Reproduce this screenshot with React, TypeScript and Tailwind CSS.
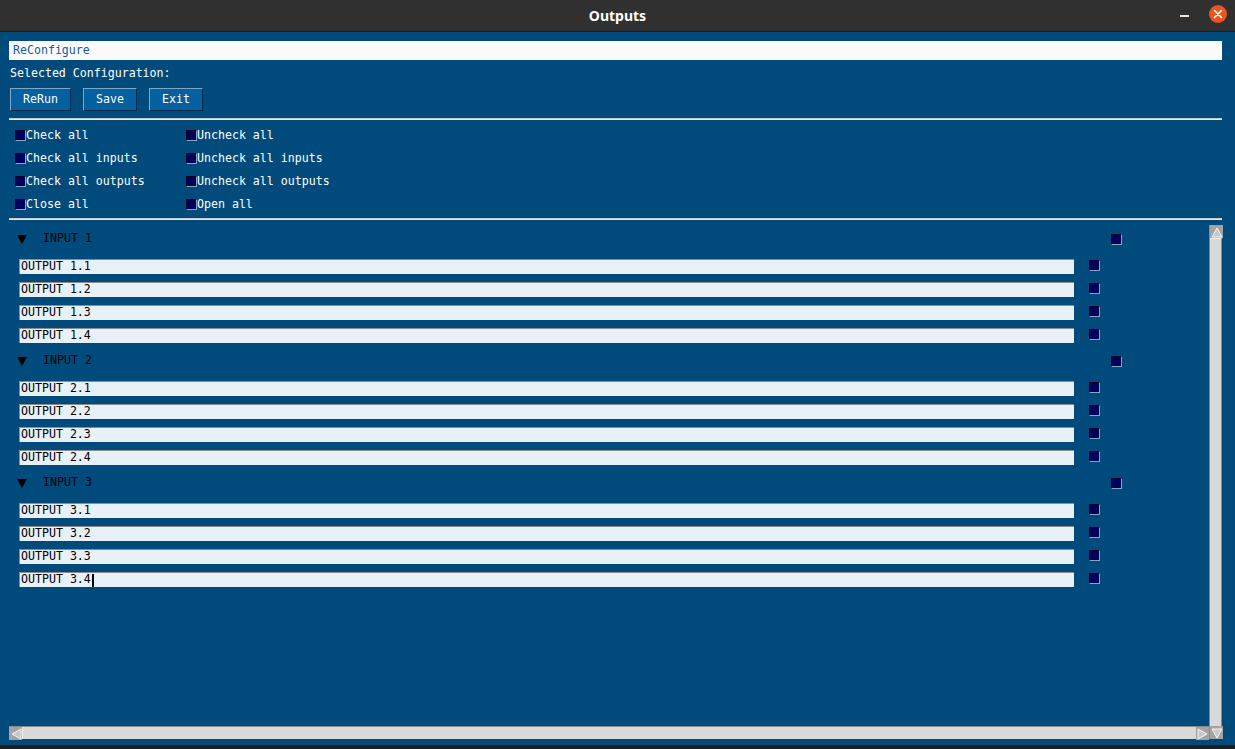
import React from 'react'

const mono = { fontFamily: '"DejaVu Sans Mono", "Liberation Mono", monospace' }

// Tk style check square: dark fill, light edge at right/bottom
function Box() {
  return <span className="block w-[11px] h-[11px] bg-[#000058] border-t border-l border-t-[#00002a] border-l-[#00002a] border-r border-b border-r-[#8aa4c8] border-b-[#8aa4c8] shrink-0" />
}

function Btn({ label, w }: { label: string; w: string }) {
  return (
    <div className={`${w} h-[23px] flex items-center justify-center pt-[1px] bg-[#0560a0] text-white border border-t-[#7fa6c6] border-l-[#7fa6c6] border-r-[#00284a] border-b-[#00284a]`}>
      {label}
    </div>
  )
}

function Arrow({ dir }: { dir: 'up' | 'down' | 'left' | 'right' }) {
  const pts = {
    up: '6,2 11,11 1,11',
    down: '1,2 11,2 6,11',
    left: '2,6 11,1 11,11',
    right: '1,1 10,6 1,11',
  }[dir]
  return (
    <div className="w-[13px] h-[13px] bg-[#a3a3a3] flex items-center justify-center shrink-0">
      <svg width="12" height="12" viewBox="0 0 12 12">
        <polygon points={pts} fill="#c8c8c8" stroke="#f4f4f4" strokeWidth="1" />
      </svg>
    </div>
  )
}

const actions: [string, string][] = [
  ['Check all', 'Uncheck all'],
  ['Check all inputs', 'Uncheck all inputs'],
  ['Check all outputs', 'Uncheck all outputs'],
  ['Close all', 'Open all'],
]

export default function App() {
  const inputs = [1, 2, 3]
  return (
    <div className="w-[1235px] h-[749px] flex flex-col bg-[#2c2c2c] overflow-hidden text-[11.6px]" style={mono}>
      {/* title bar */}
      <div className="h-[32px] shrink-0 relative flex items-center justify-center bg-[#303030] border-b border-[#1c1c1c]">
        <span className="text-white font-bold text-[14px]" style={{ fontFamily: '"Noto Sans", "DejaVu Sans", sans-serif' }}>Outputs</span>
        <span className="absolute left-[1180px] top-[15px] w-[9px] h-[2px] bg-[#e8e8e8]" />
        <span className="absolute left-[1209px] top-[5px] w-[18px] h-[18px] rounded-full bg-[#e95420] flex items-center justify-center">
          <svg width="10" height="10" viewBox="0 0 10 10">
            <path d="M1.5 1.5 L8.5 8.5 M8.5 1.5 L1.5 8.5" stroke="#fff" strokeWidth="1.6" strokeLinecap="round" />
          </svg>
        </span>
      </div>

      {/* body */}
      <div className="flex-1 flex flex-col bg-[#014b7c] pl-[9px] pr-[13px] pt-[9px] pb-[6px] min-h-0">
        <div className="h-[19px] shrink-0 bg-[#fafafa] text-[#1a5a98] flex items-center pl-[4px]">ReConfigure</div>
        <div className="h-[27px] shrink-0 flex items-center pl-[1px] text-white">Selected Configuration:</div>
        <div className="flex gap-[12px] pl-[1px] shrink-0 pt-[1px]">
          <Btn label="ReRun" w="w-[61px]" />
          <Btn label="Save" w="w-[54px]" />
          <Btn label="Exit" w="w-[54px]" />
        </div>
        <div className="mt-[7px] h-[2px] shrink-0 bg-[#c8c8c8] border-b border-[#e8e8e8]" />

        <div className="flex flex-col pt-[4px] pl-[6px] shrink-0">
          {actions.map(([a, b]) => (
            <div key={a} className="h-[23px] flex items-center text-white">
              <div className="w-[171px] flex items-center"><Box /><span>{a}</span></div>
              <div className="flex items-center"><Box /><span>{b}</span></div>
            </div>
          ))}
        </div>
        <div className="mt-[2px] h-[2px] shrink-0 bg-[#c8c8c8] border-b border-[#e8e8e8]" />

        {/* scrolled area */}
        <div className="flex-1 mt-[5px] flex min-h-0">
          <div className="flex-1 flex flex-col min-w-0">
            <div className="flex-1 flex flex-col min-h-0 pt-[2px]">
              {inputs.map((i) => (
                <div key={i} className="flex flex-col">
                  <div className="h-[30px] flex items-start">
                    <div className="h-[24px] w-full flex items-center text-black">
                      <svg width="10" height="9" viewBox="0 0 10 9" className="ml-[8px]">
                        <polygon points="0,0 10,0 5,9" fill="#000" />
                      </svg>
                      <span className="ml-[16px]">INPUT {i}</span>
                      <span className="ml-auto mr-[87px]"><Box /></span>
                    </div>
                  </div>
                  {[1, 2, 3, 4].map((o) => (
                    <div key={o} className="h-[23px] flex items-start pt-[2px]">
                      <div className="ml-[10px] w-[1055px] h-[15px] bg-[#e8f0f8] border-t border-l border-[#8c8c8c] flex items-center pl-[1px] text-black leading-none">
                        OUTPUT {i}.{o}
                        {i === 3 && o === 4 && <span className="inline-block w-[2px] h-[13px] bg-black ml-[1px]" />}
                      </div>
                      <span className="ml-[15px] mt-[1px]"><Box /></span>
                    </div>
                  ))}
                </div>
              ))}
            </div>
            {/* horizontal scrollbar */}
            <div className="h-[13px] shrink-0 flex bg-[#d9d9d9] border-t border-[#8a8a8a]">
              <Arrow dir="left" />
              <div className="flex-1 bg-[#d9d9d9] border-l border-[#f0f0f0]" />
              <Arrow dir="right" />
            </div>
          </div>
          {/* vertical scrollbar */}
          <div className="w-[13px] shrink-0 flex flex-col bg-[#d9d9d9] border-l border-[#8a8a8a]">
            <Arrow dir="up" />
            <div className="flex-1 border-t border-[#f0f0f0] border-r border-r-[#8a8a8a]" />
            <Arrow dir="down" />
          </div>
        </div>
      </div>
      <div className="h-[4px] shrink-0 bg-[#1e1e1e]" />
    </div>
  )
}
